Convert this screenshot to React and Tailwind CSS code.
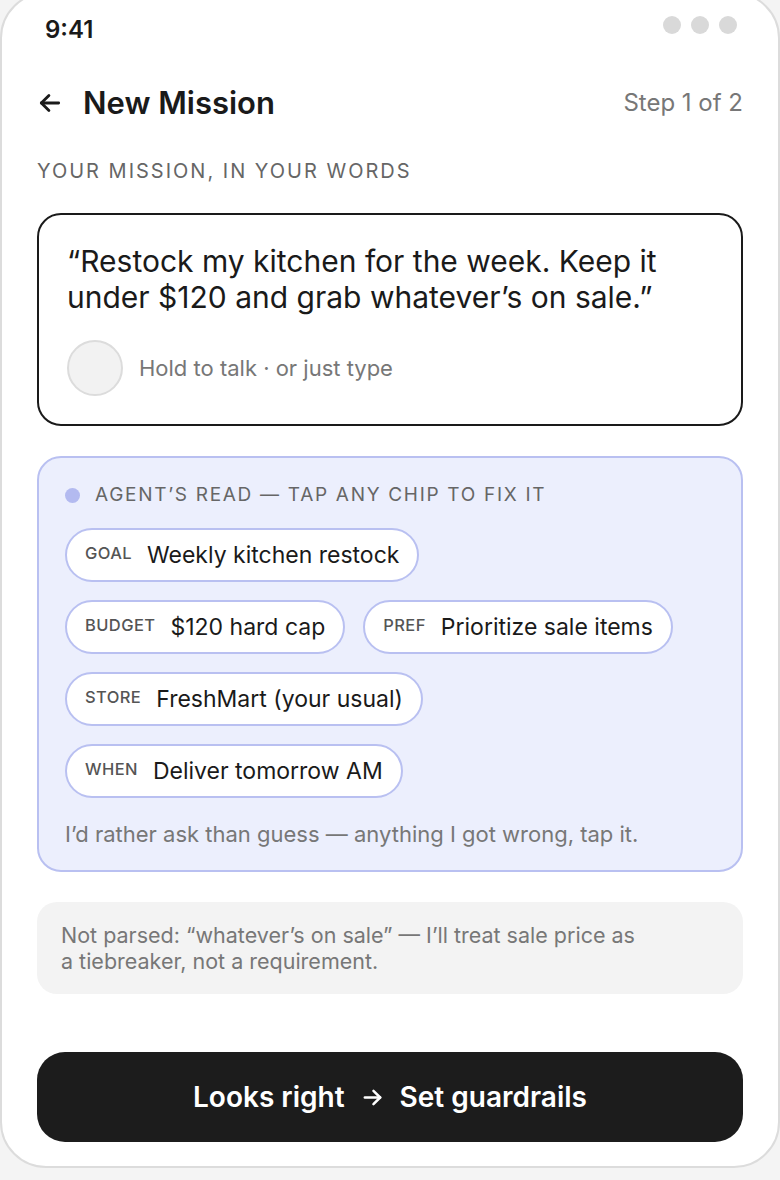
import React from "react";

const chips = [
  [["GOAL", "Weekly kitchen restock"]],
  [
    ["BUDGET", "$120 hard cap"],
    ["PREF", "Prioritize sale items"],
  ],
  [["STORE", "FreshMart (your usual)"]],
  [["WHEN", "Deliver tomorrow AM"]],
];

const Arrow = ({ size = 22, stroke = 2.4, className = "" }) => (
  <svg
    width={size}
    height={size}
    viewBox="0 0 24 24"
    fill="none"
    stroke="currentColor"
    strokeWidth={stroke}
    strokeLinecap="round"
    strokeLinejoin="round"
    className={className}
  >
    <path d="M4 12h16" />
    <path d="M13 5l7 7-7 7" />
  </svg>
);

const Chip = ({ label, value }) => (
  <div className="flex h-[54px] items-center gap-[15px] rounded-full border-2 border-[#b9c0f1] bg-white pl-[18px] pr-[18px]">
    <span className="mb-[3px] text-[16.5px] font-medium tracking-[0.4px] text-[#555]">
      {label}
    </span>
    <span className="text-[23px] text-[#1a1a1a]">{value}</span>
  </div>
);

export default function App() {
  return (
    <div
      className="min-h-[1180px] w-[780px] overflow-hidden bg-[#f4f4f4]"
      style={{ fontFamily: "Inter, 'Noto Sans', sans-serif" }}
    >
      <div className="-mt-[8px] flex flex-col rounded-[46px] border-2 border-[#dcdcdc] bg-white px-[35px] pb-[24px]">
        {/* status bar */}
        <div className="flex items-start justify-between pt-[22px]">
          <span className="pl-[8px] text-[24px] font-semibold leading-7 text-[#1a1a1a]">
            9:41
          </span>
          <div className="flex gap-[10px] pr-[6px]">
            <span className="h-[18px] w-[18px] rounded-full bg-[#d9d9d9]" />
            <span className="h-[18px] w-[18px] rounded-full bg-[#d9d9d9]" />
            <span className="h-[18px] w-[18px] rounded-full bg-[#d9d9d9]" />
          </div>
        </div>

        {/* header */}
        <div className="mt-[41px] flex h-9 items-center justify-between">
          <div className="flex items-center gap-[20px]">
            <Arrow size={26} stroke={2.6} className="rotate-180 text-[#1a1a1a]" />
            <h1 className="text-[31px] font-semibold text-[#1a1a1a]">
              New Mission
            </h1>
          </div>
          <span className="text-[24px] text-[#777]">Step 1 of 2</span>
        </div>

        <p className="mt-[38px] text-[20px] leading-6 tracking-[2px] text-[#666]">
          YOUR MISSION, IN YOUR WORDS
        </p>

        {/* mission input */}
        <div className="mt-[30px] rounded-[24px] border-[2.5px] border-[#1a1a1a] pb-[28px] pl-[28px] pr-[12px] pt-[28px]">
          <p className="text-[30px] leading-[36px] text-[#1a1a1a]">
            “Restock my kitchen for the week. Keep it
            <br />
            under $120 and grab whatever’s on sale.”
          </p>
          <div className="mt-[25px] flex items-center gap-[16px]">
            <span className="h-[56px] w-[56px] rounded-full border-2 border-[#dcdcdc] bg-[#f2f2f2]" />
            <span className="text-[22px] text-[#777]">
              Hold to talk · or just type
            </span>
          </div>
        </div>

        {/* agent's read */}
        <div className="mt-[30px] rounded-[24px] border-2 border-[#b9c0f1] bg-[#eceffd] pb-[23px] pl-[26px] pr-[14px] pt-[25px]">
          <div className="flex h-6 items-center gap-[15px]">
            <span className="h-[15px] w-[15px] rounded-full bg-[#b3baf0]" />
            <span className="text-[19px] tracking-[1.7px] text-[#666]">
              AGENT’S READ — TAP ANY CHIP TO FIX IT
            </span>
          </div>
          <div className="mt-[21px] flex flex-col gap-[18px]">
            {chips.map((row, i) => (
              <div key={i} className="flex gap-[18px]">
                {row.map(([l, v]) => (
                  <Chip key={l} label={l} value={v} />
                ))}
              </div>
            ))}
          </div>
          <p className="mt-[23px] text-[22px] leading-[26px] text-[#777]">
            I’d rather ask than guess — anything I got wrong, tap it.
          </p>
        </div>

        {/* not parsed */}
        <div className="mt-[30px] rounded-[20px] bg-[#f3f3f3] px-[24px] py-[20px]">
          <p className="text-[21.5px] leading-[26px] text-[#777]">
            Not parsed: “whatever’s on sale” — I’ll treat sale price as
            <br />a tiebreaker, not a requirement.
          </p>
        </div>

        {/* cta */}
        <button className="mt-[58px] flex h-[90px] w-full items-center justify-center gap-[16px] rounded-[28px] bg-[#1c1c1c] text-[28px] font-semibold text-white">
          <span>Looks right</span>
          <Arrow size={23} stroke={2.6} />
          <span>Set guardrails</span>
        </button>
      </div>
    </div>
  );
}
